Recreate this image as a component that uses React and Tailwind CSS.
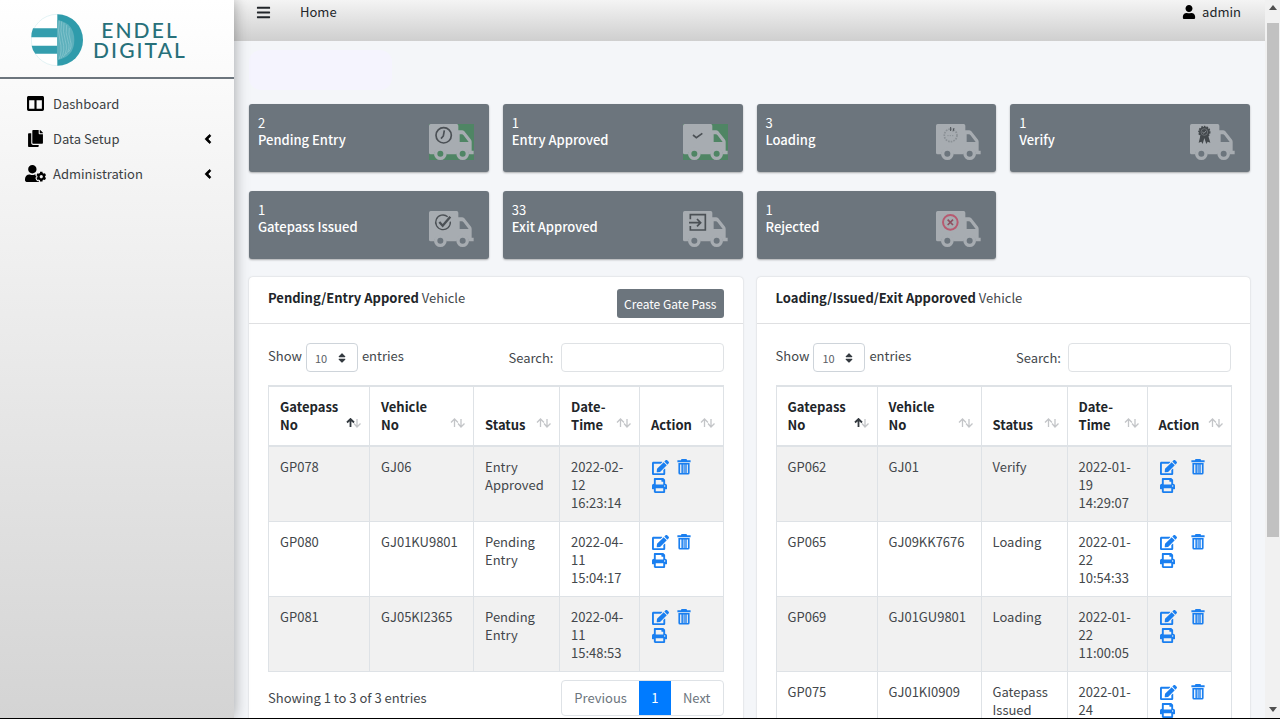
import React from "react";
import {
  FaAngleLeft,
  FaBars,
  FaColumns,
  FaCopy,
  FaEdit,
  FaPrint,
  FaSort,
  FaUser,
  FaUserCog,
} from "react-icons/fa";

const stats = [
  { count: 2, label: "Pending Entry", badge: "clock", green: true },
  { count: 1, label: "Entry Approved", badge: "tick", green: true },
  { count: 3, label: "Loading", badge: "spinner" },
  { count: 1, label: "Verify", badge: "ribbon" },
  { count: 1, label: "Gatepass Issued", badge: "check" },
  { count: 33, label: "Exit Approved", badge: "exit" },
  { count: 1, label: "Rejected", badge: "cross" },
];

const pendingRows = [
  ["GP078", "GJ06", "Entry Approved", "2022-02-12 16:23:14"],
  ["GP080", "GJ01KU9801", "Pending Entry", "2022-04-11 15:04:17"],
  ["GP081", "GJ05KI2365", "Pending Entry", "2022-04-11 15:48:53"],
];

const issuedRows = [
  ["GP062", "GJ01", "Verify", "2022-01-19 14:29:07"],
  ["GP065", "GJ09KK7676", "Loading", "2022-01-22 10:54:33"],
  ["GP069", "GJ01GU9801", "Loading", "2022-01-22 11:00:05"],
  ["GP075", "GJ01KI0909", "Gatepass Issued", "2022-01-24"],
];

const columns = [
  { label: "Gatepass No", width: "w-[101px]", sorted: true },
  { label: "Vehicle No", width: "w-[104px]" },
  { label: "Status", width: "w-[86px]" },
  { label: "Date-Time", width: "w-[80px]" },
  { label: "Action", width: "w-[84px]" },
];

function Badge({ kind }) {
  const dark = "#4b5055";
  if (kind === "clock")
    return (
      <g fill="none" stroke={dark} strokeWidth="5">
        <circle cx="44" cy="34" r="23" />
        <path d="M46 19 L43 36 L36 44" />
      </g>
    );
  if (kind === "tick")
    return <path d="M30 33 L40 41 L58 28" fill="none" stroke={dark} strokeWidth="5" />;
  if (kind === "spinner")
    return (
      <g fill="none" stroke="#8b9196" strokeWidth="5">
        <circle cx="44" cy="34" r="19" strokeDasharray="5 3" />
        <path d="M34 35h20" strokeWidth="3" strokeDasharray="4 3" />
        <path d="M44 9v12M54 12l-3 10" stroke={dark} strokeWidth="3" />
      </g>
    );
  if (kind === "ribbon")
    return (
      <g>
        <path d="M31 36 L26 56 L34 53 L38 60 L43 42 L49 60 L53 53 L61 56 L55 36Z" fill="#43484c" />
        <circle cx="43" cy="24" r="16" fill="#43484c" stroke="#43484c" strokeWidth="5" strokeDasharray="5 3" />
        <circle cx="43" cy="24" r="10" fill="none" stroke="#7b8085" strokeWidth="2" />
        <path d="M37 24l5 4 7-8" fill="none" stroke="#8b9095" strokeWidth="3" />
      </g>
    );
  if (kind === "check")
    return (
      <g fill="none" stroke={dark}>
        <path d="M56 17 A22 22 0 1 0 64 32" strokeWidth="4" />
        <path d="M31 33 L41 44 L64 17" strokeWidth="7" />
      </g>
    );
  if (kind === "exit")
    return (
      <g fill="none" stroke={dark} strokeWidth="5">
        <path d="M22 25V11h45v46H22V45" />
        <path d="M18 35h34M42 24l11 11-11 11" />
      </g>
    );
  return (
    <g fill="none" stroke="#b75a70" strokeWidth="6">
      <circle cx="43" cy="34" r="22" />
      <path d="M35 26l16 16M51 26L35 42" stroke="#8e4f60" strokeWidth="5" />
    </g>
  );
}

function Truck({ badge, green }) {
  return (
    <svg viewBox="0 0 135 108" className="h-9 w-[45px] shrink-0" aria-hidden="true">
      {green && <rect width="135" height="108" fill="#4f8564" />}
      <path
        fill="#a7acb1"
        fillRule="evenodd"
        d="M5 0H83Q88 0 88 5V19H99Q103 19 106 22L125 46Q128 50 128 54V80H134V91H119A18 18 0 0 0 83 91H52A18 18 0 0 0 16 91H5Q0 91 0 86V5Q0 0 5 0ZM92 31V54H119L103 33Q101 31 99 31Z"
      />
      <g fill="none" stroke="#a7acb1" strokeWidth="10">
        <circle cx="34" cy="89" r="14" />
        <circle cx="101" cy="89" r="14" />
      </g>
      <Badge kind={badge} />
    </svg>
  );
}

function Logo() {
  return (
    <svg viewBox="0 0 156 156" className="size-[52px] shrink-0" aria-hidden="true">
      <circle cx="78" cy="78" r="77" fill="#fff" stroke="#d5edf0" strokeWidth="2" />
      <path d="M6 43H79V70H1Q1 55 6 43ZM2 95H79V119H13Q4 108 2 95Z" fill="#349eae" />
      <path d="M79 1a77 77 0 0 1 0 154Z" fill="#2f9bab" />
      <path d="M79 18Q130 28 130 78T79 138Z" fill="#5db0bc" />
      <g fill="none" stroke="#8fcad2" strokeWidth="2">
        <path d="M85 20Q79 50 87 80T84 136M92 22Q86 50 95 80T90 133M99 27Q94 52 103 80T97 129M107 33Q102 56 111 80T104 122M115 42Q111 60 118 80T112 114" />
      </g>
    </svg>
  );
}

function TrashIcon() {
  return (
    <svg viewBox="0 0 14 16" className="h-4 w-3.5" fill="currentColor" aria-hidden="true">
      <path d="M4.5 0h5l.6 1.2H13.6V3.2H.4V1.2H3.9Z" />
      <path
        fillRule="evenodd"
        d="M1.4 4H12.6V14Q12.6 15.6 11 15.6H3Q1.4 15.6 1.4 14ZM3.1 5.4V13.9H4.4V5.4ZM5.9 5.4V13.9H6.5V5.4ZM7.7 5.4V13.9H8.3V5.4ZM9.7 5.4V13.9H10.9V5.4Z"
      />
    </svg>
  );
}

function SortArrows({ sorted }) {
  return (
    <svg viewBox="0 0 15 10" className="mb-1.5 h-[10px] w-[15px] shrink-0" fill="none" aria-hidden="true">
      <path d="M4.5 9V1M1 4.5L4.5 1L8 4.5" stroke={sorted ? "#343a40" : "#c3c5c8"} strokeWidth={sorted ? 1.8 : 1.3} />
      <path d="M11 1V9M8 5.5L11 9L14.5 5.5" stroke="#c3c5c8" strokeWidth="1.3" />
    </svg>
  );
}

function NavItem({ icon: Icon, label, nested }) {
  return (
    <li>
      <a href="#" className="flex h-[35px] items-center pr-[19px] pl-6">
        <span className="flex w-[22px] justify-center text-black">
          <Icon className={label === "Administration" ? "size-[21px]" : "size-[17px]"} />
        </span>
        <span className="ml-[7px] flex-1 text-[#3b3f43]">{label}</span>
        {nested && <FaAngleLeft className="size-3.5 stroke-black stroke-[24px] text-black" />}
      </a>
    </li>
  );
}

function DataTable({ id, rows, actionGap }) {
  return (
    <div className="px-[19px] pt-[19px]">
      <div className="flex items-start justify-between">
        <div className="flex items-center">
          <label htmlFor={`${id}-length`} className="pb-1">Show</label>
          <span className="relative mx-1 inline-flex items-center">
            <select
              id={`${id}-length`}
              className="h-[29px] w-[52px] appearance-none rounded border border-[#ced4da] bg-white pl-2 text-[11px] text-[#5b6066]"
            >
              <option>10</option>
            </select>
            <FaSort className="pointer-events-none absolute right-2.5 size-3 text-[#343a40]" />
          </span>
          <span className="pb-1">entries</span>
        </div>
        <div className="flex items-center">
          <label htmlFor={`${id}-search`}>Search:</label>
          <input
            id={`${id}-search`}
            type="search"
            className="ml-[7px] h-[29px] w-[163px] rounded border border-[#dfe2e5] bg-white px-2"
          />
        </div>
      </div>
      <table className="mt-[13px] w-full table-fixed border-collapse border border-[#dee2e6]">
        <thead>
          <tr className="border-y-2 border-[#dee2e6] text-[#212529]">
            {columns.map((c) => (
              <th key={c.label} className={`${c.width} border-x border-[#dee2e6] py-[11px] pr-2 pl-[11px] text-left align-bottom font-bold`}>
                <span className="flex items-end justify-between">
                  <span className="w-min">{c.label}</span>
                  <SortArrows sorted={c.sorted} />
                </span>
              </th>
            ))}
          </tr>
        </thead>
        <tbody>
          {rows.map((row) => (
            <tr key={row[0]} className="h-[75px] odd:bg-[#f1f1f1]">
              {row.map((cell) => (
                <td key={cell} className="border border-[#dee2e6] pt-[11px] pr-2 pb-[9px] pl-[11px] align-top">
                  {cell}
                </td>
              ))}
              <td className="border border-[#dee2e6] pt-[11px] pr-2 pb-[9px] pl-3 align-top text-[#1a7ff0]">
                <div className={`flex ${actionGap}`}>
                  <button type="button" aria-label="Edit" className="flex h-[18px] items-center">
                    <FaEdit className="size-[17px]" />
                  </button>
                  <button type="button" aria-label="Delete" className="flex h-[18px] items-center">
                    <TrashIcon />
                  </button>
                </div>
                <button type="button" aria-label="Print" className="flex h-[18px] items-center">
                  <FaPrint className="size-[15px]" />
                </button>
              </td>
            </tr>
          ))}
        </tbody>
      </table>
      <div className="flex items-center justify-between pt-2 pb-5">
        <p>Showing 1 to {rows.length} of {rows.length} entries</p>
        <nav className="flex h-9 rounded border border-[#dee2e6] text-[#6c757d]">
          <button type="button" className="px-3">Previous</button>
          <button type="button" className="w-8 bg-[#007bff] text-white">1</button>
          <button type="button" className="px-3">Next</button>
        </nav>
      </div>
    </div>
  );
}

function Panel({ strong, button, children }) {
  return (
    <section className="rounded bg-white shadow-[0_0_2px_rgba(0,0,0,0.2)]">
      <header className="flex h-[47px] items-start justify-between border-b border-[#dfe0e2] px-[19px] pt-3">
        <h2 className="text-[#43474b]">
          <b className="text-[#212529]">{strong}</b> Vehicle
        </h2>
        {button && (
          <button type="button" className="h-[29px] rounded-[3px] bg-[#6c757d] px-[7px] text-[12px] text-white">
            {button}
          </button>
        )}
      </header>
      {children}
    </section>
  );
}

export default function App() {
  return (
    <div className="flex h-screen overflow-hidden border-b border-black bg-[#f4f6f9] font-['Noto_Sans_CJK_SC',sans-serif] text-[13px] leading-[18px] text-[#43474b]">
      <aside className="z-10 w-[234px] shrink-0 bg-linear-to-b from-white to-[#d4d4d4] shadow-[0_0_14px_rgba(0,0,0,0.35)]">
        <a href="#" className="flex h-[79px] items-center border-b-2 border-[#6c757d] pt-0.5 pl-[31px]">
          <Logo />
          <span className="ml-2.5 text-center font-['Lato',sans-serif] text-[21px] leading-5 font-medium tracking-widest text-[#27707a]">
            ENDEL
            <br />
            DIGITAL
          </span>
        </a>
        <nav>
          <ul className="pt-[7px]">
            <NavItem icon={FaColumns} label="Dashboard" />
            <NavItem icon={FaCopy} label="Data Setup" nested />
            <NavItem icon={FaUserCog} label="Administration" nested />
          </ul>
        </nav>
      </aside>

      <div className="min-w-0 flex-1 overflow-hidden">
        <header className="flex h-[41px] items-start bg-linear-to-b from-[#f4f4f4] to-[#cfcfcf] pt-[3px] pr-6 pl-[22px] text-[#212529]">
          <button type="button" aria-label="Toggle menu" className="flex h-[18px] items-center">
            <FaBars className="size-[15px]" />
          </button>
          <a href="#" className="ml-[29px]">Home</a>
          <a href="#" className="ml-auto flex items-center gap-1.5">
            <FaUser className="size-3.5 text-black" />
            admin
          </a>
        </header>
        <main className="px-[15px] pt-[9px]">
          <div className="h-10 w-[143px] rounded-xl bg-[#f5f4fe]" />
          <ul className="mt-3.5 grid grid-cols-4 gap-x-3.5 gap-y-[19px]">
            {stats.map((s) => (
              <li
                key={s.label}
                className="flex h-[68px] items-start justify-between rounded-[3px] bg-[#6c757d] pt-2.5 pr-[15px] pl-[9px] text-white shadow-[0_1px_2px_rgba(0,0,0,0.3)]"
              >
                <p className="leading-[17px]">
                  {s.count}
                  <br />
                  <span className="font-medium">{s.label}</span>
                </p>
                <div className="pt-2.5">
                  <Truck badge={s.badge} green={s.green} />
                </div>
              </li>
            ))}
          </ul>
          <div className="mt-[18px] grid grid-cols-2 items-start gap-3.5">
            <Panel strong="Pending/Entry Appored" button="Create Gate Pass">
              <DataTable id="pending" rows={pendingRows} actionGap="gap-2" />
            </Panel>
            <Panel strong="Loading/Issued/Exit Apporoved">
              <DataTable id="issued" rows={issuedRows} actionGap="gap-3.5" />
            </Panel>
          </div>
        </main>
      </div>

      <div className="flex w-[15px] shrink-0 flex-col items-center bg-[#f1f1f1]" aria-hidden="true">
        <svg viewBox="0 0 8 5" className="mt-[5px] h-[5px] w-2">
          <path d="M0 5L4 0L8 5Z" fill="#505050" />
        </svg>
        <div className="mt-[13px] h-[514px] w-3 bg-[#c1c1c1]" />
        <svg viewBox="0 0 8 5" className="mt-auto mb-1.5 h-[5px] w-2">
          <path d="M0 0L4 5L8 0Z" fill="#505050" />
        </svg>
      </div>
    </div>
  );
}
